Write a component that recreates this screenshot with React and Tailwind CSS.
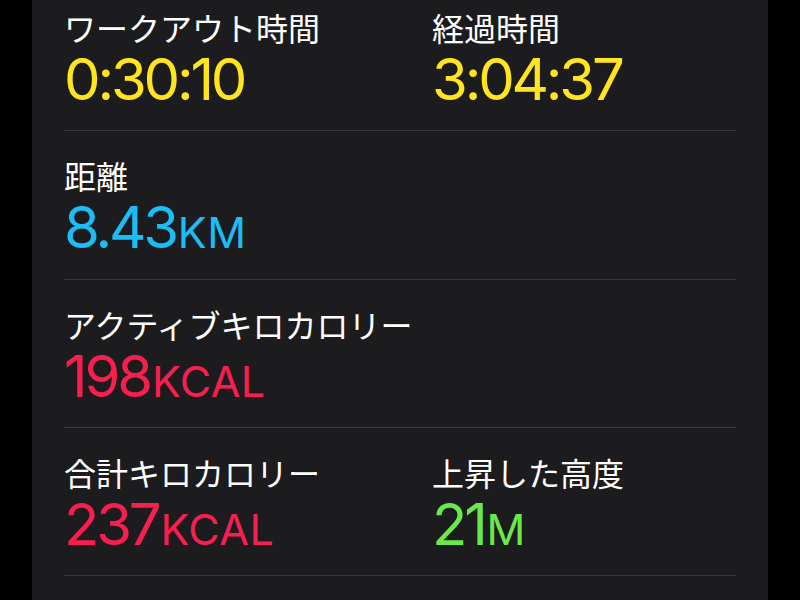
import React from "react";

const label = "text-[32px] leading-[32px] text-white font-['Noto_Sans_CJK_JP','Noto_Sans',sans-serif]";
const value = "h-[58px] text-[58px] leading-[58px] font-['Inter',sans-serif] tracking-[-0.055em] mt-[7px] whitespace-nowrap";
const unit = "text-[43px] leading-none tracking-[0.01em] ml-[2px]";

function Metric({ title, num, u, color }) {
  return (
    <div className="flex flex-col">
      <div className={label}>{title}</div>
      <div className={`${value} ${color}`}>
        {num}
        {u && <span className={unit}>{u}</span>}
      </div>
    </div>
  );
}

export default function App() {
  return (
    <div className="w-[800px] h-[600px] bg-black overflow-hidden">
      <div className="mx-[32px] h-full bg-[#1c1c1e] px-[32px]">
        <div className="flex border-b border-[#38383a] pt-[11px] pb-[22px]">
          <div className="w-[368px]">
            <Metric title="ワークアウト時間" num="0:30:10" color="text-[#ffe41e]" />
          </div>
          <Metric title="経過時間" num="3:04:37" color="text-[#ffe41e]" />
        </div>
        <div className="flex border-b border-[#38383a] pt-[28px] pb-[23px]">
          <Metric title="距離" num="8.43" u="KM" color="text-[#1abdf5]" />
        </div>
        <div className="flex border-b border-[#38383a] pt-[28px] pb-[22px]">
          <Metric title="アクティブキロカロリー" num="198" u="KCAL" color="text-[#fa1e50]" />
        </div>
        <div className="flex border-b border-[#38383a] pt-[28px] pb-[22px]">
          <div className="w-[368px]">
            <Metric title="合計キロカロリー" num="237" u="KCAL" color="text-[#fa1e50]" />
          </div>
          <Metric title="上昇した高度" num="21" u="M" color="text-[#6be84a]" />
        </div>
      </div>
    </div>
  );
}
